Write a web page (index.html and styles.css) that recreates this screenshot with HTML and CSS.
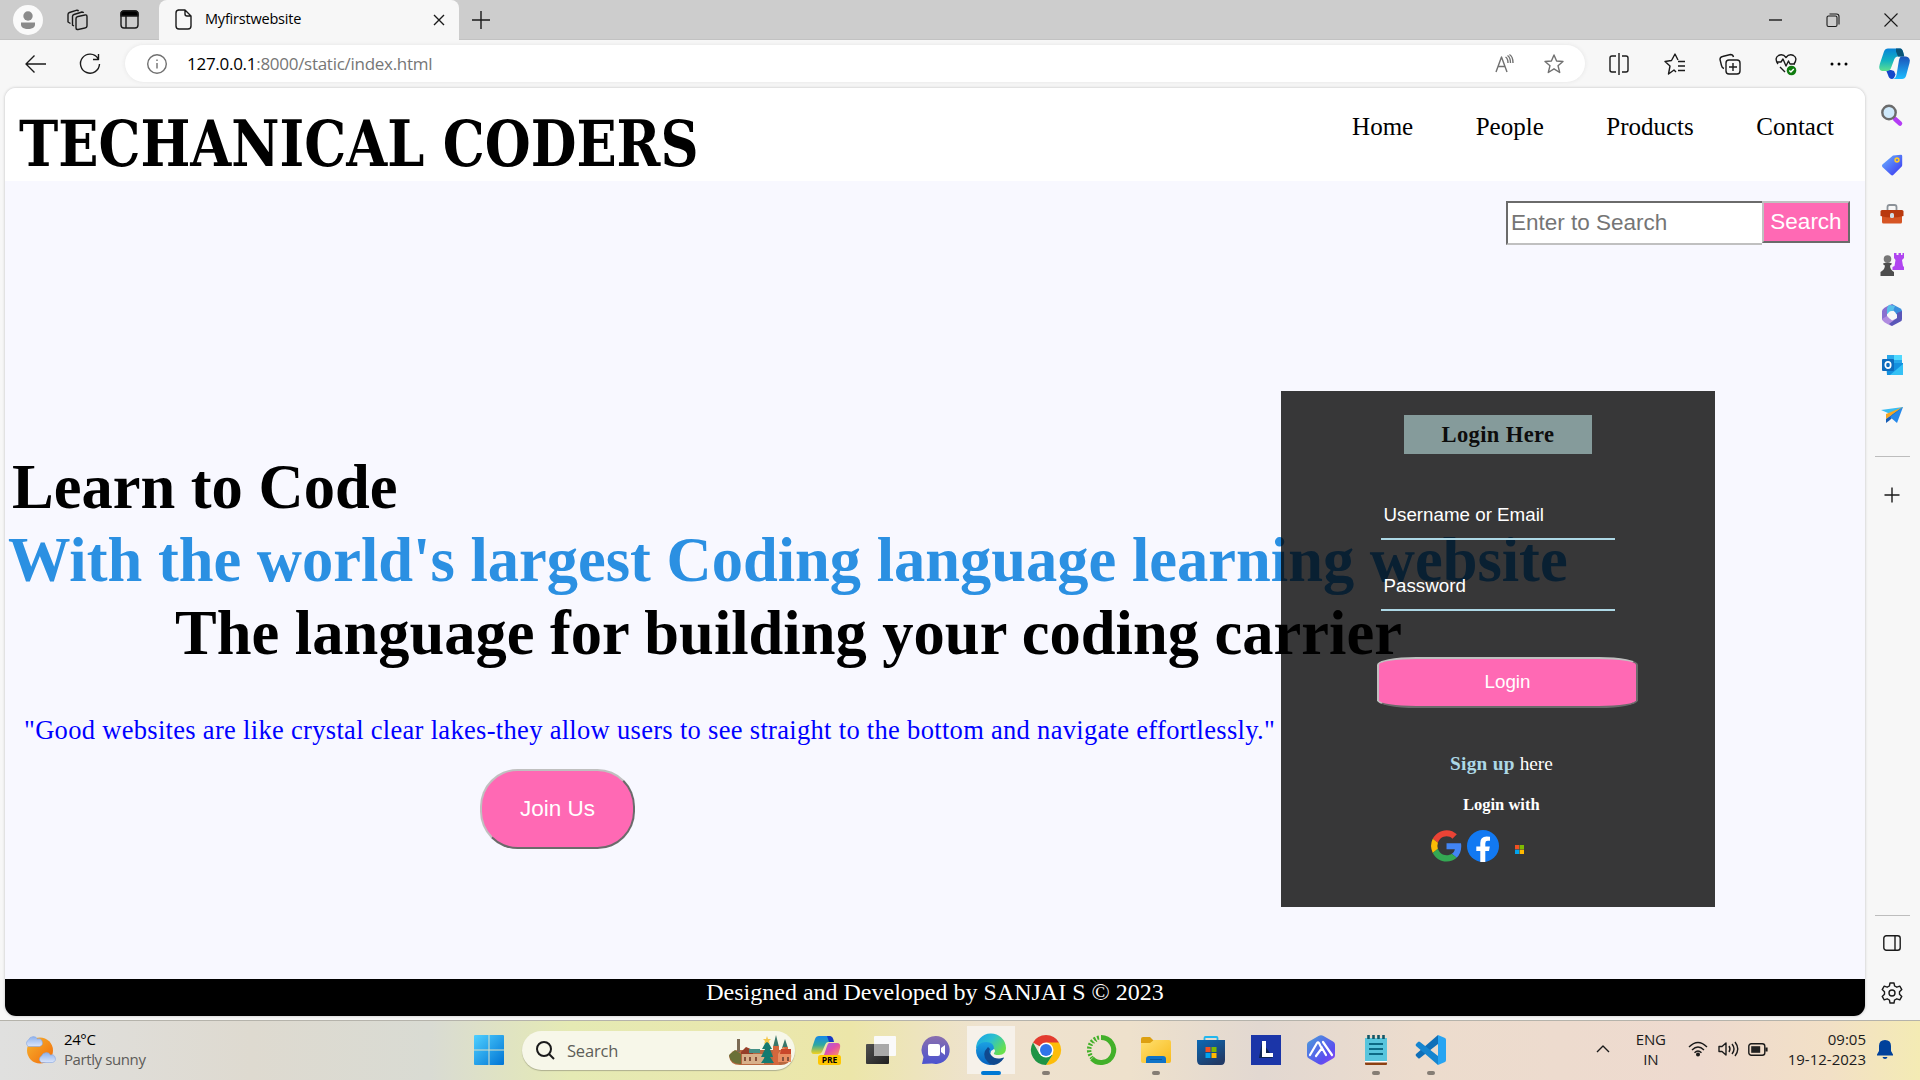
FILE: index.html
```html
<!DOCTYPE html>
<html lang="en">
<head>
<meta charset="utf-8">
<title>Myfirstwebsite</title>
<link rel="stylesheet" href="styles.css">
</head>
<body>
<div class="tabs">
  <div class="tab-tools">
    <span class="avatar"><svg width="30" height="30" viewBox="0 0 30 30"><circle cx="15" cy="15" r="15" fill="#fafafa"/><circle cx="15" cy="11" r="4.7" fill="#8b8b8b"/><path d="M8 17.5h14v2c0 3-3 4.500-7 4.500s-7-1.500-7-4.500z" fill="#8b8b8b"/></svg></span>
    <svg class="line" width="22" height="22" viewBox="0 0 22 22"><rect x="10" y="6" width="11" height="13" rx="2" transform="skewY(-12) translate(0 4)"/><path d="M8 17l-1.500-.8V7.500q0-1.500 1.500-2l8-2.500q1.500 0 1.500 1"/><path d="M4.500 14.500L2 13V5.500Q2 4 3.500 3.500L11 1.200q1.200 0 1.500 1"/></svg>
    <svg class="line window-icon" width="19" height="19" viewBox="0 0 19 19"><rect x="1" y="1" width="17" height="17" rx="3"/><path d="M1 6V4q0-3 3-3h11q3 0 3 3v2z" fill="#000"/><path d="M6 6v12"/></svg>
  </div>
  <div class="tab">
    <svg class="line" width="17" height="21" viewBox="0 0 17 21"><path d="M3 1h7l6 6v10q0 3-3 3H4q-3 0-3-3V4q0-3 3-3M10 1v4q0 2 2 2h4"/></svg>
    <span class="tab-title">Myfirstwebsite</span>
    <svg class="line" width="12" height="12" viewBox="0 0 12 12"><path d="M1 1l10 10M11 1L1 11"/></svg>
  </div>
  <svg class="line new-tab" width="18" height="18" viewBox="0 0 18 18"><path d="M9 0v18M0 9h18"/></svg>
  <div class="window-buttons">
    <svg class="line" width="13" height="14" viewBox="0 0 13 14"><path d="M0 7h13"/></svg>
    <svg class="line thin" width="14" height="14" viewBox="0 0 14 14"><rect x="1" y="3" width="10" height="10.500" rx="1.500"/><path d="M3.500 1h7Q13 1 13 3.500v8"/></svg>
    <svg class="line thin" width="14" height="14" viewBox="0 0 14 14"><path d="M.5.5l13 13M13.500.5L.5 13.500"/></svg>
  </div>
</div>

<div class="toolbar">
  <svg class="line back" width="21" height="18" viewBox="0 0 21 18"><path d="M9.500.5L1 9l8.500 8.500M1 9h20"/></svg>
  <svg class="line reload" width="22" height="22" viewBox="0 0 22 22"><path d="M19 5.500A9.500 9.500 0 1 0 20.500 11M19.500 1v5.500H14"/></svg>
  <div class="address">
    <svg class="line gray" width="20" height="20" viewBox="0 0 20 20"><circle cx="10" cy="10" r="9.300"/><path d="M10 9v5.500M10 5.500v1.500"/></svg>
    <span class="url">127.0.0.1<i>:8000/static/index.html</i></span>
    <svg class="line gray read" width="19" height="19" viewBox="0 0 19 19"><path d="M1 18L6.500 3 12 18M3 12.500h7M10.500 3q2.500 1.500 2.500 6M12.500 1.500q3 2 3 7.500M14.500.5q3.500 2 3.500 8.500"/></svg>
    <svg class="line gray" width="20" height="20" viewBox="0 0 20 20"><path d="M10 1l2.600 6 6.400.5-5 4.200 1.700 6.800L10 14.800l-5.700 3.700L6 11.700 1 7.500 7.400 7z"/></svg>
  </div>
  <div class="actions">
    <svg class="line" width="22" height="22" viewBox="0 0 22 22"><path d="M8 3H4Q2 3 2 5v12q0 2 2 2h4M11 0v22M14 3h4q2 0 2 2v12q0 2-2 2h-4"/></svg>
    <svg class="line" width="22" height="22" viewBox="0 0 22 22"><path d="M12 19l-2-2-5.500 4L6 13 1 8.500l6.500-1L11 1l3 6M14 8.500h7M14 13h7M14 17.500h7"/></svg>
    <svg class="line" width="22" height="22" viewBox="0 0 22 22"><rect x="7" y="7" width="14" height="14" rx="3"/><path d="M14 10v8M10 14h8M5 15.500q-2-.5-2.500-3L1 6.500Q1 4 3.500 3.500l8-2q2.500 0 3 2.500"/></svg>
    <svg class="line" width="22" height="22" viewBox="0 0 22 22"><path d="M3 11Q-1 5 3.500 2.500 8 .5 11 4.500 14 .5 18.500 2.500 23 5 19 11M2 9h4l2-3 3 7 2.500-5L15 11h5M5 14l5 5"/><circle cx="16.500" cy="17.500" r="4.800" fill="#107c10" stroke="none"/><path d="M14.300 17.500l1.600 1.600 2.900-3" stroke="#fff"/></svg>
    <svg width="18" height="22" viewBox="0 0 18 22"><circle cx="2" cy="11" r="1.500"/><circle cx="9" cy="11" r="1.500"/><circle cx="16" cy="11" r="1.500"/></svg>
    <svg class="copilot" width="31" height="31" viewBox="0 0 31 31"><defs><linearGradient id="cg" x1="0" y1="0" x2="0" y2="1"><stop stop-color="#0883d8"/><stop offset=".55" stop-color="#14b4c0"/><stop offset="1" stop-color="#5fe08f"/></linearGradient><linearGradient id="cb" x1="0" y1="0" x2="0" y2="1"><stop stop-color="#1c52b8"/><stop offset="1" stop-color="#1dbcff"/></linearGradient></defs><path d="M7 22h5l3 1 1.500 3.500Q15 31 13 31q-3 0-4-4z" fill="#1447c9"/><path d="M9 .5h12q2.500 0 3.500 5l.8 3H19q-3 0-4.200 4L12 20q-1 3-4 3H3Q-1 22 .8 16L5 3.500Q6 .5 9 .5z" fill="url(#cg)"/><path d="M17 .5h4q2.500 0 3.500 5l.8 3H19l-2-5z" fill="#0a5376"/><path d="M22 8.500h5q5 1 3.500 6.500L27 28q-1 3-4 3h-9q3-1 3.500-4L20 12q.6-3 2-3.500z" fill="url(#cb)"/></svg>
  </div>
</div>

<div class="content">
  <div class="page">
    <header class="site-header">
      <h1 class="brand">TECHANICAL CODERS</h1>
      <nav class="nav"><a>Home</a><a>People</a><a>Products</a><a>Contact</a></nav>
    </header>
    <form class="search"><span class="search-field">Enter to Search</span><span class="search-button">Search</span></form>
    <section class="hero">
      <h2 class="first">Learn to Code</h2>
      <h2 class="second">With the world's largest Coding language learning website</h2>
      <h2 class="third">The language for building your coding carrier</h2>
      <p class="quote">"Good websites are like crystal clear lakes-they allow users to see straight to the bottom and navigate effortlessly."</p>
      <a class="join">Join Us</a>
    </section>
    <aside class="login">
      <h3 class="login-title">Login Here</h3>
      <div class="field">Username or Email</div>
      <div class="field">Password</div>
      <a class="login-button">Login</a>
      <p class="signup"><b>Sign up</b> here</p>
      <p class="with">Login with</p>
      <div class="socials">
        <svg width="31" height="32" viewBox="2 2 44 44.500" preserveAspectRatio="none"><path fill="#ea4335" d="M24 9.500c3.540 0 6.710 1.220 9.210 3.600l6.850-6.850C35.900 2.380 30.470 0 24 0 14.620 0 6.510 5.380 2.560 13.220l7.980 6.190C12.430 13.720 17.740 9.500 24 9.500z" transform="translate(2.200 2.200) scale(.91)"/><path fill="#4285f4" d="M46.980 24.550c0-1.570-.15-3.090-.38-4.550H24v9.020h12.940c-.58 2.960-2.260 5.480-4.780 7.180l7.730 6c4.510-4.180 7.090-10.360 7.090-17.650z" transform="translate(2.200 2.200) scale(.91)"/><path fill="#fbbc05" d="M10.530 28.590a14.500 14.500 0 0 1 0-9.180l-7.980-6.190a24 24 0 0 0 0 21.560z" transform="translate(2.200 2.200) scale(.91)"/><path fill="#34a853" d="M24 48c6.480 0 11.930-2.130 15.890-5.810l-7.730-6c-2.150 1.450-4.920 2.300-8.160 2.300-6.260 0-11.570-4.220-13.470-9.910l-7.980 6.190C6.510 42.620 14.620 48 24 48z" transform="translate(2.200 2.200) scale(.91)"/></svg>
        <svg width="32" height="32" viewBox="0 0 32 32"><circle cx="16" cy="16" r="16" fill="#1279f2"/><path fill="#fff" d="M13.300 32V21H9.300v-4.600h4V13q0-6.500 6.200-6.500 2 0 3.500.3v4h-2.200q-2.500 0-2.500 2.400v3.200h4.500L22 21h-3.700v11z"/></svg>
        <svg class="ms" width="9" height="9" viewBox="0 0 9 9"><path fill="#f25022" d="M0 0h4.300v4.300H0z"/><path fill="#7fba00" d="M4.700 0H9v4.300H4.700z"/><path fill="#00a4ef" d="M0 4.700h4.300V9H0z"/><path fill="#ffb900" d="M4.700 4.700H9V9H4.700z"/></svg>
      </div>
    </aside>
    <footer class="site-footer">Designed and Developed by SANJAI S © 2023</footer>
  </div>

  <div class="sidebar">
    <svg width="22" height="22" viewBox="0 0 22 22"><path d="M14 15l5 4.500" stroke="#b43cf5" stroke-width="4.500" stroke-linecap="round"/><circle cx="8" cy="8.500" r="6.700" fill="#cfe9fb" stroke="#6b6b6b" stroke-width="2.400"/></svg>
    <svg width="22" height="22" viewBox="0 0 22 22"><defs><linearGradient id="tg" x1="0" y1="0" x2="1" y2="1"><stop stop-color="#6ab8ff"/><stop offset="1" stop-color="#3a2ff0"/></linearGradient></defs><path d="M12 1.500L20 .8q1.200 0 1.200 1.200v9q0 1-.7 1.800l-8 8q-1.300 1.300-2.700 0L1.400 13q-1-1.200 0-2.600z" fill="url(#tg)"/><circle cx="16" cy="6" r="1.900" fill="none" stroke="#ffc928" stroke-width="1.600"/></svg>
    <svg width="24" height="22" viewBox="0 0 24 22"><path d="M7.500 6V3q0-2 2-2h5q2 0 2 2v3" fill="none" stroke="#8c9298" stroke-width="1.800"/><rect x="2" y="10" width="20" height="9.500" rx="1.500" fill="#d65524"/><path d="M2 6h20q1.500 0 1.500 1.500V12q-11.500 3-23 0V7.500Q.5 6 2 6z" fill="#b9390e"/><rect x="10" y="9" width="4" height="5" rx="1.500" fill="#d0dde5"/></svg>
    <svg width="24" height="22" viewBox="0 0 24 22"><path d="M14-1h2.500v2h2v-2H21v2h1.500v-2H24v5l-2 2 1 6 1 1v3H12.500v-3l2-1 1-6L14 4z" fill="#b045f0"/><circle cx="7.500" cy="5" r="3.800" fill="#777"/><path d="M3 9.500q4.500-2 9 0-1 2-2 2 0 4 4 6.500v4H.5v-4q4-2 4.500-6.500-1.500 0-2-2z" fill="#4d4d4d"/></svg>
    <svg width="22" height="22" viewBox="0 0 22 22"><path d="M11 0l8.500 4.500q1.500 1 1.500 2.500v6l-6-3-4-5z" fill="#3a8fdd"/><path d="M11 0Q1 4 1 7v9l5-2V9l7-4z" fill="#8a6fd0"/><path d="M1 15l5-3 5 4.500 4.500-2-5 7.500Q1 18 1 15z" fill="#b08be0"/><path d="M21 7v8q0 2-1.500 2.500L11 22l-3-2 8-6V9z" fill="#5a56b8"/><path d="M8 .8L14 2l-2 5-6 3V4z" fill="#57c0ea"/><circle cx="11" cy="11" r="4" fill="#f7f7f7"/></svg>
    <svg width="21" height="22" viewBox="0 0 21 22"><path d="M5 1h15v9H5z" fill="#28a8ea"/><path d="M12 1h8v5h-8z" fill="#50d9ff"/><path d="M4 9h17v12H5z" fill="#1490df"/><path d="M21 10v11H8z" fill="#35c1f5"/><rect y="5" width="12" height="12" rx="1" fill="#0f6cbd"/><ellipse cx="6" cy="11" rx="2.700" ry="3.100" fill="none" stroke="#fff" stroke-width="1.700"/></svg>
    <svg width="22" height="22" viewBox="0 -2 22 22"><path d="M0 4L22 1 14 10z" fill="#39bdf2"/><path d="M22 1L5 8v5z" fill="#f5a623"/><path d="M22 1L5 13v4l4-3z" fill="#155cb5"/><path d="M22 1L9 11l7 6z" fill="#2588ea"/></svg>
    <hr>
    <svg class="line" width="16" height="16" viewBox="0 0 16 16"><path d="M8 .5v15M.5 8h15"/></svg>
    <hr class="lower">
    <svg class="line" width="18" height="16" viewBox="0 0 18 16"><rect x=".8" y=".8" width="16.400" height="14.400" rx="2.500"/><path d="M12 1v14"/></svg>
    <svg class="line" width="22" height="22" viewBox="0 0 22 22"><path d="M9 1h4l.6 3 2.200 1.200 3-1 2 3.400L18.500 9.800v2.400l2.300 2.200-2 3.400-3-1L13.600 18l-.6 3H9l-.6-3-2.200-1.200-3 1-2-3.400 2.300-2.200V9.800L1.200 7.600l2-3.400 3 1L8.400 4z"/><circle cx="11" cy="11" r="3"/></svg>
  </div>
</div>

<div class="taskbar">
  <div class="weather">
    <svg width="30" height="30" viewBox="0 0 30 30"><defs><linearGradient id="sun" x1="0" y1="0" x2="1" y2="1"><stop stop-color="#f6b530"/><stop offset="1" stop-color="#f26a0a"/></linearGradient><linearGradient id="cl" x1="0" y1="0" x2="0" y2="1"><stop stop-color="#8eb2ee"/><stop offset="1" stop-color="#dbe5fa"/></linearGradient></defs><circle cx="15" cy="15.500" r="13" fill="url(#sun)"/><path id="cloud" d="M3.500 11.500a3.600 3.600 0 0 1 0-6.500 5 5 0 0 1 9-1 3.800 3.800 0 0 1 2 7.500z" fill="url(#cl)" stroke="#85a6e2" stroke-width=".6"/><use href="#cloud" x="13" y="16"/></svg>
    <div class="weather-text"><span>24°C</span><small>Partly sunny</small></div>
  </div>
  <div class="apps">
    <div class="slot"><svg width="30" height="30" viewBox="0 0 30 30"><defs><linearGradient id="win" x1="0" y1="0" x2="1" y2="1"><stop stop-color="#4fd0ff"/><stop offset="1" stop-color="#0074d4"/></linearGradient></defs><path fill="url(#win)" d="M1 0h13.500v14.500H0V1q0-1 1-1zM15.500 0H29q1 0 1 1v13.500H15.500zM0 15.500h14.500V30H1q-1 0-1-1zM15.500 15.500H30V29q0 1-1 1H15.500z"/></svg></div>
    <div class="task-search">
      <svg class="line heavy" width="19" height="19" viewBox="0 0 19 19"><circle cx="8" cy="8" r="7"/><path d="M13 13l5 5"/></svg>
      <span>Search</span>
      <svg width="64" height="32" viewBox="0 0 64 32"><path d="M1 22q3-6 9-6h50q4 2 3 8-2 7-10 7H12Q2 31 1 22z" fill="#b9683f"/><path d="M1 21l6-5 6 4v10Q2 30 1 21z" fill="#6a7038"/><path d="M9 5h3v13H9z" fill="#7b6b54"/><path d="M13 18l5-5 7 3v4H13z" fill="#963e28"/><path d="M14 20h22v10H14z" fill="#d8b08a"/><path d="M21 15h11v4H21z" fill="#469087"/><path d="M45 13l3-12 3 12v18h-6zM54 14l3-9 3 9z" fill="#38766a"/><path d="M45 12h6v19h-6zM55 13h5v6h-5z" fill="#d4673d"/><path d="M50 20l5-7 8 7v8H50z" fill="#e88e62"/><path d="M53 15h10v5H52z" fill="#c9462a"/><path d="M39 6l-5 9h3l-4 8h4l-4 6h13l-4-6h3l-3-8h2z" fill="#147a70"/><path d="M39 2l1 3h3l-2 2 1 3-3-2-3 2 1-3-2-2h3z" fill="#f3c74a"/><path d="M16 23h2v4h-2zM21 23h2v4h-2zM27 23h2v4h-2zM54 23h2v4h-2zM59 23h2v4h-2z" fill="#85503b"/></svg>
    </div>
    <div class="slot"><svg width="30" height="30" viewBox="0 0 30 30"><defs><linearGradient id="p1" x1="0" y1="0" x2="0" y2="1"><stop stop-color="#1688e8"/><stop offset=".5" stop-color="#2fa8a0"/><stop offset="1" stop-color="#f4d21c"/></linearGradient><linearGradient id="p2" x1="0" y1="0" x2="1" y2="1"><stop stop-color="#9b5ff0"/><stop offset=".5" stop-color="#e04fa8"/><stop offset="1" stop-color="#ff9460"/></linearGradient></defs><path d="M8 1h10q3 0 4 6h-5q-2 0-3 3l-3 7q-1 2-4 2H3q-4 0-2-6L4 4q1-3 4-3z" fill="url(#p1)"/><path d="M16 1h3q3 0 4 6h-5z" fill="#1739c4"/><path d="M18 8h8q4 0 3 5l-2 7H13l3-9q1-3 2-3z" fill="url(#p2)"/><rect x="7" y="20" width="23" height="10" rx="2.500" fill="#ffc700"/><text class="pre" x="18.500" y="28">PRE</text></svg></div>
    <div class="slot"><svg width="30" height="30" viewBox="0 0 30 30"><defs><linearGradient id="tv" x1="0" y1="0" x2="1" y2="1"><stop stop-color="#505050"/><stop offset="1" stop-color="#202020"/></linearGradient></defs><rect y="9" width="23" height="20" rx="1" fill="url(#tv)"/><rect x="8" y="1" width="22" height="20" rx="1" fill="#fafafa"/><path d="M8 9h15v12H9q-1 0-1-1z" fill="#a9a9a9"/></svg></div>
    <div class="slot"><svg width="30" height="30" viewBox="0 0 30 30"><defs><linearGradient id="chat" x1="0" y1="0" x2="0" y2="1"><stop stop-color="#8a6fae"/><stop offset="1" stop-color="#4b53d0"/></linearGradient></defs><path d="M15 1a14 14 0 1 1-4 27.500L1 29l1.500-7A14 14 0 0 1 15 1z" fill="url(#chat)"/><rect x="7" y="9" width="12" height="12" rx="2" fill="#fff"/><path d="M20 13l4-3v10l-4-3z" fill="#fff"/></svg></div>
    <div class="slot active"><svg width="30" height="30" viewBox="0 0 30 30"><defs><linearGradient id="e1" x1="0" y1="0" x2="1" y2=".6"><stop stop-color="#18a0e8"/><stop offset=".5" stop-color="#2bbfd0"/><stop offset="1" stop-color="#68e04c"/></linearGradient><linearGradient id="e2" x1="0" y1="0" x2="0" y2="1"><stop stop-color="#1ba0e2"/><stop offset="1" stop-color="#0662c0"/></linearGradient></defs><path d="M0 14A15 15 0 0 1 30 13q0 7-7 7-6 0-5-2 2-2 0-4-3-4-10-3Q2 11 0 14z" fill="url(#e1)"/><path d="M0 15Q2 7 10 7q8 0 8 7l-3 2q-3 7 6 10-3 4-7 4A15 15 0 0 1 0 15z" fill="url(#e2)"/><path d="M12 12q-7 7-1 14 3 4 7 4 6-1 10-7 0-1-2 0-7 2-11-3-3-3-1-6z" fill="#10498f"/></svg></div>
    <div class="slot running"><svg width="30" height="30" viewBox="0 0 30 30"><path d="M15 15L2 7.500A15 15 0 0 1 28 7.500z" fill="#e33b2e"/><path d="M28 7.500A15 15 0 0 1 15 30l7-11-7-11.500z" fill="#fdbd0a"/><path d="M2 7.500l6.500 11.500 13 1L15 30A15 15 0 0 1 2 7.500z" fill="#1e9445"/><circle cx="15" cy="15" r="7.500" fill="#fff"/><circle cx="15" cy="15" r="6" fill="#2f74e8"/></svg></div>
    <div class="slot"><svg width="30" height="30" viewBox="0 0 30 30"><g fill="none" stroke="#42b029"><path d="M15 2.500a12.500 12.500 0 1 1-9 21" stroke-width="5"/><path d="M13 2.500A12.500 12.500 0 0 0 6 23" stroke-width="4" stroke-dasharray="2 1.500"/><path d="M11 6A10 10 0 0 0 6 20" stroke-width="1.500" stroke-dasharray="1 2"/></g></svg></div>
    <div class="slot running"><svg width="30" height="30" viewBox="0 0 30 30"><defs><linearGradient id="fo" x1="0" y1="0" x2="1" y2="1"><stop stop-color="#ffe070"/><stop offset="1" stop-color="#f8ba1c"/></linearGradient></defs><path d="M0 4q0-2 2-2h7l4 4v6H0z" fill="#dda010"/><path d="M0 8h9l4-3h15q2 0 2 2v19q0 2-2 2H2q-2 0-2-2z" fill="url(#fo)"/><path d="M5 28v-4q0-3 3-3h14q3 0 3 3v4z" fill="#0f73c8"/><path d="M9 24.500h12" stroke="#08589e"/></svg></div>
    <div class="slot"><svg width="30" height="30" viewBox="0 0 30 30"><defs><linearGradient id="st" x1="0" y1="0" x2=".6" y2="1"><stop stop-color="#0b69b4"/><stop offset="1" stop-color="#213a66"/></linearGradient></defs><path d="M8.500 7V3q0-1 1-1h11q1 0 1 1v4" fill="none" stroke="#22b7ee" stroke-width="1.800"/><path d="M1 5h28v20q0 5-4 5H5q-4 0-4-5z" fill="url(#st)"/><path fill="#f25022" d="M9.500 12h5v5h-5z"/><path fill="#7fba00" d="M15.500 12h5v5h-5z"/><path fill="#00a4ef" d="M9.500 18h5v5h-5z"/><path fill="#ffb900" d="M15.500 18h5v5h-5z"/></svg></div>
    <div class="slot"><svg width="30" height="30" viewBox="0 0 30 30"><path fill="#1b35a8" d="M0 0h30v30H0z"/><path d="M11 7l-3 16h13l1-1z" fill="#0d2450"/><path fill="#fff" d="M11 6h4v12h7v4H11z"/></svg></div>
    <div class="slot"><svg width="30" height="30" viewBox="0 0 30 30"><defs><linearGradient id="ai" x1="0" y1="0" x2="1" y2="1"><stop stop-color="#4a9fd8"/><stop offset=".7" stop-color="#5a4ef0"/><stop offset="1" stop-color="#9a48f5"/></linearGradient></defs><path d="M12.500 1q2.500-1.500 5 0L27 6.500q2 1.200 2 3v11q0 2-2 3L17.500 29q-2.500 1.500-5 0L3 23.500q-2-1-2-3v-11q0-1.800 2-3z" fill="url(#ai)"/><path d="M4 20L11 8q1-1.500 2 0l2 4M10 21l6-8 4 7M17 7l9 13" fill="none" stroke="#fff" stroke-width="2.200" stroke-linecap="round"/></svg></div>
    <div class="slot running"><svg width="24" height="30" viewBox="0 0 24 30"><rect x="1" y="22" width="22" height="8" rx="1" fill="#8c4012"/><path d="M1 3h22v23q0 1-1 1H2q-1 0-1-1z" fill="#58c5dd"/><path d="M1 26h22v1.500H1z" fill="#fff"/><path d="M5 9h14M5 14h14M5 19h14" stroke="#0d6a85" stroke-width="1.800"/><path d="M4.500 0v4M9.500 0v4M14.500 0v4M19.500 0v4" stroke="#145767" stroke-width="2.600"/></svg></div>
    <div class="slot running"><svg width="30" height="30" viewBox="0 0 30 30"><path d="M22 0l7 3q1 .5 1 2v20q0 1.500-1 2l-7 3z" fill="#27a4f2"/><path d="M22 0v9L4 23q-1 1-2 0l-2-2q-.8-1 0-2z" fill="#0f6fb8"/><path d="M22 30v-9L4 7q-1-1-2 0L0 9q-.8 1 0 2z" fill="#1585d0"/></svg></div>
  </div>
  <div class="tray">
    <svg class="line" width="14" height="8" viewBox="0 0 14 8"><path d="M1 7l6-6 6 6"/></svg>
    <div class="lang"><span>ENG</span><span>IN</span></div>
    <svg class="line wifi" width="20" height="16" viewBox="0 0 20 16"><path d="M1 6q9-9 18 0M4 9q6-6 12 0M6.500 11.800q3.500-3.500 7 0"/><circle cx="10" cy="13.500" r="1.300" fill="#222"/></svg>
    <svg class="line volume" width="21" height="16" viewBox="0 0 21 16"><path d="M1 5.500h3L8 2v12l-4-3.500H1zM11 5q2 3 0 6M14 3q4 5 0 10M17 1q5.500 7 0 14"/></svg>
    <svg class="line battery" width="20" height="13" viewBox="0 0 20 13"><rect x=".8" y=".8" width="16" height="11.400" rx="2.500"/><rect x="3.200" y="3.200" width="9" height="6.600" fill="#222" stroke="none"/><path d="M18.500 4.500v4" stroke-width="2.200"/></svg>
    <div class="clock"><span>09:05</span><span>19-12-2023</span></div>
    <svg class="bell" width="16" height="19" viewBox="0 0 16 19"><path d="M8 0q6 0 6 6v5l2 3.500v1H0v-1L2 11V6q0-6 6-6zM5.500 17h5Q10 19 8 19t-2.500-2z" fill="#00419b"/></svg>
  </div>
</div>
</body>
</html>
```
FILE: styles.css
```css
* { box-sizing: border-box; margin: 0; padding: 0; }
body {
  width: 1920px; height: 1080px; overflow: hidden;
  background: #f7f7f7;
  font-family: "Open Sans", "Noto Sans", sans-serif;
  display: flex; flex-direction: column;
}
svg { display: block; flex: none; overflow: visible; }
.line { fill: none; stroke: #1a1a1a; stroke-width: 1.4; stroke-linejoin: round; }
.thin { stroke-width: 1.1; }
.heavy { stroke-width: 2; }
.gray { stroke: #707070; }

/* tab strip */
.tabs { height: 40px; background: #cdcdcd; display: flex; align-items: center; flex: none; border-bottom: 1px solid #c2c2c2; }
.tab-tools { width: 159px; padding-left: 13px; display: flex; align-items: center; gap: 23px; }
.window-icon { margin-left: 9px; }
.tab {
  width: 300px; height: 41px; margin-bottom: -2px; padding: 0 14px 2px 16px;
  background: #f7f7f7; border-radius: 8px 8px 0 0;
  display: flex; align-items: center;
}
.tab-title { flex: 1; margin-left: 13px; font-size: 14.500px; letter-spacing: -.2px; line-height: 20px; padding-bottom: 1px; }
.new-tab { margin-left: 13px; }
.window-buttons { margin-left: auto; display: flex; gap: 44px; padding-right: 22px; }

/* toolbar */
.toolbar { height: 48px; flex: none; display: flex; align-items: center; padding-bottom: 1px; }
.back { margin-left: 25px; }
.reload { margin-left: 33px; }
.address {
  width: 1460px; height: 37px; margin-left: 24px; padding: 0 21px 0 22px;
  border-radius: 19px; background: #fff; box-shadow: 0 0 4px #e4e4e4;
  display: flex; align-items: center;
}
.url { flex: 1; margin-left: 20px; font-size: 17px; letter-spacing: -.28px; padding-bottom: 1px; }
.url i { font-style: normal; color: #767676; }
.read { margin-right: 30px; }
.actions { display: flex; align-items: center; gap: 33.500px; margin-left: 23px; }
.copilot { margin-left: -3px; }

/* page */
.content { height: 933px; flex: none; display: flex; }
.page {
  position: relative; width: 1860px; height: 928px; margin-left: 5px;
  background: #f8f8ff; border-radius: 11px; overflow: hidden;
  box-shadow: 0 0 3px #bbb;
  font-family: "Liberation Serif", serif;
  display: flex; flex-direction: column;
}
.site-header { height: 93px; background: #fff; display: flex; justify-content: space-between; padding: 0 31px 0 14px; }
.brand {
  font: bold 63px/92px "DejaVu Serif Condensed", "DejaVu Serif", serif;
  font-stretch: condensed; white-space: nowrap; padding-top: 10px;
  width: 690px; transform: scaleX(.931); transform-origin: left;
}
.nav { display: flex; gap: 62.500px; font-size: 25px; line-height: 78px; }
.search { display: flex; align-self: flex-end; margin: 20px 15px 0 0; font: 22.500px "Liberation Sans", sans-serif; }
.search-field { width: 256px; height: 44px; border: 2px solid; border-color: #6b6b6b #c0c0c0 #c0c0c0 #6b6b6b; border-right: 0; background: #fff; color: #757575; line-height: 39px; padding-left: 3px; }
.search-button { width: 88px; height: 42px; border: 2px solid; border-color: #c0c0c0 #6b6b6b #6b6b6b #c0c0c0; background: #ff69b4; color: #fff; line-height: 37px; text-align: center; }
.hero { margin-top: 206px; }
.hero h2 { font-size: 62.500px; line-height: 73px; white-space: nowrap; }
.first { padding-left: 7px; }
.second { padding-left: 3px; color: #2b90e2; }
.third { padding-left: 170px; }
.quote { margin: 40px 0 0 19px; font-size: 26.500px; line-height: 40px; letter-spacing: .31px; color: #00f; white-space: nowrap; }
.join {
  display: block; width: 155px; height: 80px; margin: 19px 0 0 475px;
  border: 2px solid; border-color: #c0c0c0 #6b6b6b #6b6b6b #c0c0c0; border-radius: 37.500px;
  background: #ff69b4; color: #fff; font: 22.500px/75px "Liberation Sans", sans-serif; text-align: center;
}

/* login panel lies over the headings */
.login {
  position: absolute; left: 1276px; top: 303px; width: 434px; height: 516px;
  background: rgba(0, 0, 0, .78); color: #fff; padding-top: 24px;
}
.login-title { width: 188px; height: 39px; margin: 0 auto 37px; background: #859b9b; color: #0d0d0d; font-size: 22.500px; line-height: 39px; text-align: center; letter-spacing: .4px; }
.field { width: 234px; height: 49px; margin: 0 0 22px 100px; padding-left: 2.500px; border-bottom: 2px solid #add8e6; font: 18.750px/47px "Liberation Sans", sans-serif; }
.login-button {
  display: block; width: 261px; height: 51px; margin: 46px 0 0 96px;
  border: 2px solid; border-color: #c0c0c0 #6b6b6b #6b6b6b #c0c0c0; border-radius: 15%;
  background: #ff69b4; font: 18.750px/46px "Liberation Sans", sans-serif; text-align: center;
}
.signup { margin: 40px 0 0 169px; font-size: 19.300px; line-height: 32px; }
.signup b { color: #add8e6; letter-spacing: .3px; }
.with { margin: 12px 0 0 182px; font-size: 16.500px; line-height: 26px; font-weight: bold; }
.socials { display: flex; gap: 5px; margin: 12px 0 0 150px; }
.ms { margin: 15px 0 0 11px; }
.site-footer { height: 37px; margin-top: auto; background: #000; color: #fff; font-size: 24px; line-height: 27px; text-align: center; }

/* edge sidebar */
.sidebar { width: 55px; height: 928px; display: flex; flex-direction: column; align-items: center; padding: 16px 1px 0 0; gap: 28px; }
.sidebar hr { width: 35px; border: 0; border-top: 1px solid #bdbdbd; margin-top: 2px; }
.sidebar hr + svg { margin-top: 2px; }
.sidebar .lower { margin-top: auto; }
.sidebar .lower + svg { margin: -9px 0 3px; }
.sidebar svg:last-child { margin-bottom: 12px; }

/* taskbar */
.taskbar {
  height: 60px; margin-top: -1px; flex: none; border-top: 1px solid #b5b3ab; display: flex; align-items: center;
  background: linear-gradient(90deg, #e0e0df 0, #dedad0 250px, #d9dbd3 430px, #e5eab4 570px, #ece6a9 850px, #eee2cf 980px, #eee1cc 1130px, #e2d8d1 1260px, #ecdccd 1420px, #eedacf 1700px, #f2e0c6 1830px, #f4ebb4 1920px);
}
.weather { width: 461px; padding-left: 25px; display: flex; gap: 9px; align-items: center; margin-top: -2px; }
.weather-text { display: flex; flex-direction: column; font-size: 15px; line-height: 20px; letter-spacing: -.4px; padding-bottom: 2px; }
.weather-text small { font-size: 15px; color: #5c5b58; }
.apps { display: flex; align-items: center; height: 59px; padding-bottom: 1px; }
.slot { width: 55px; height: 59px; display: flex; align-items: center; justify-content: center; position: relative; }
.task-search {
  width: 273px; height: 39px; margin: 0 3px 0 6px; padding: 0 3px 0 14px;
  border-radius: 20px; background: #f7f7e9; box-shadow: 0 1px 1px #aeb08f;
  display: flex; align-items: center; color: #5e5e58; font-size: 16.500px;
}
.task-search span { flex: 1; margin-left: 12px; letter-spacing: -.2px; }
.pre { font: bold 8.500px "Open Sans", sans-serif; text-anchor: middle; }
.active { background: linear-gradient(#f6f1ea, #f6f1ea) center / 48px 48px no-repeat; }
.active::after, .running::after { content: ""; position: absolute; bottom: 5px; width: 8px; height: 4px; border-radius: 2px; background: #857d74; }
.active::after { width: 20px; background: #0078d4; }
.tray { margin-left: auto; display: flex; align-items: center; font-size: 15px; line-height: 20px; letter-spacing: -.2px; color: #1c1c1c; padding: 0 27px 3px 0; }
.lang { display: flex; flex-direction: column; align-items: center; width: 30px; margin: 0 22px 0 26px; }
.volume { margin-left: 10px; }
.battery { margin-left: 9px; }
.clock { display: flex; flex-direction: column; align-items: flex-end; margin: 0 11px 0 20px; letter-spacing: 0; }
```
